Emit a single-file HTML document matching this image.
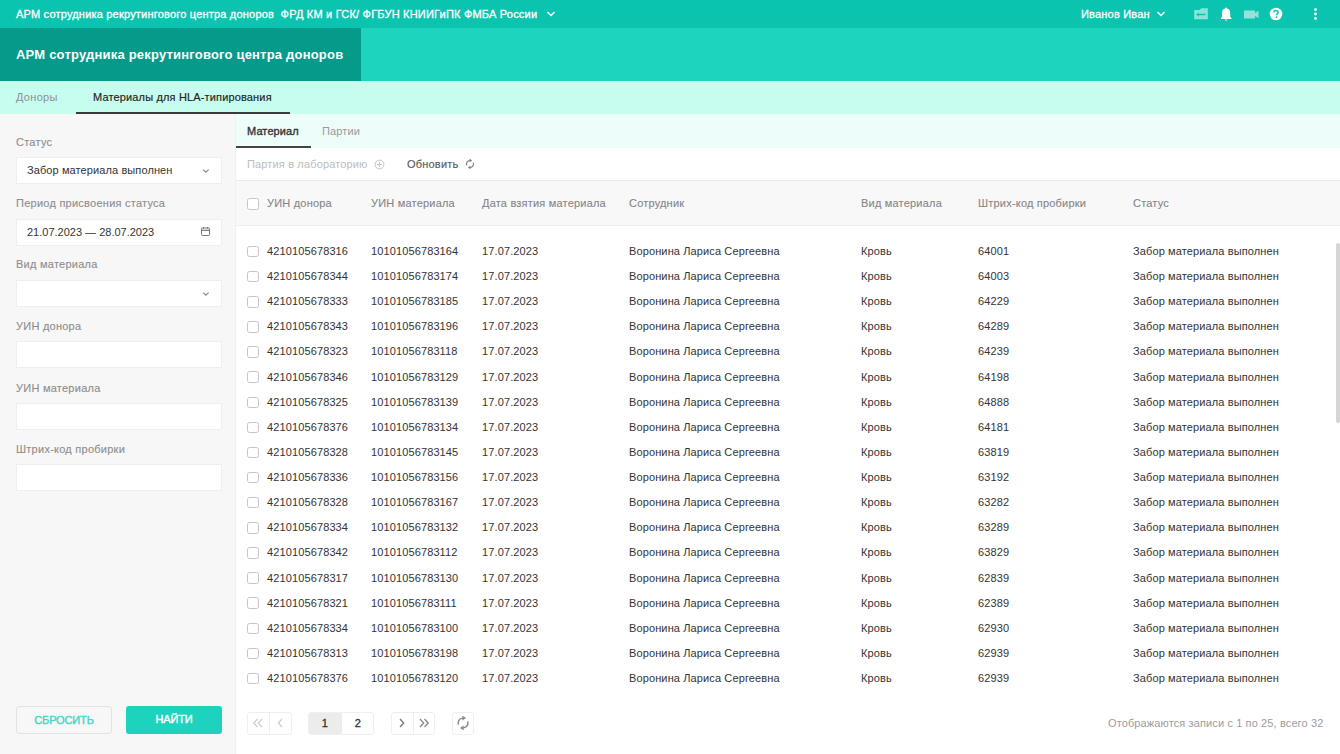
<!DOCTYPE html>
<html><head><meta charset="utf-8">
<style>
*{box-sizing:border-box;margin:0;padding:0}
html,body{width:1340px;height:754px;overflow:hidden;background:#fff;font-family:"Liberation Sans",sans-serif;position:relative}
.abs{position:absolute;white-space:nowrap}
#top{position:absolute;left:0;top:0;width:1340px;height:28px;background:#0ac4b0;color:#fff;font-size:11px}
#top .t{letter-spacing:0.2px;-webkit-text-stroke:0.3px #fff}
#hdr{position:absolute;left:0;top:28px;width:1340px;height:53px;background:#1dd5bf}
#hdr .blk{position:absolute;left:0;top:0;width:361px;height:53px;background:#069a8b}
#hdr .t{position:absolute;left:16px;top:19px;font-size:13px;font-weight:bold;color:#fff;letter-spacing:0.2px}
#nav{position:absolute;left:0;top:81px;width:1340px;height:33px;background:#c6fdef}
#nav .t1{left:16px;top:10px;font-size:11px;color:#8f8f8f;letter-spacing:0.3px}
#nav .t2{left:93px;top:10px;font-size:11px;color:#222;letter-spacing:0.15px;-webkit-text-stroke:0.15px #222}
#nav .ul{position:absolute;left:76px;top:31px;width:214px;height:2px;background:#3a3a3a}
#side{position:absolute;left:0;top:114px;width:236px;height:640px;background:#f7f7f7;border-right:1px solid #f1f1f1}
.lbl{position:absolute;left:16px;font-size:11px;color:#8c8c8c;letter-spacing:0.25px;-webkit-text-stroke:0.1px #8c8c8c}
.inp{position:absolute;left:16px;width:206px;height:27.3px;background:#fff;border:1px solid #efefef}
.inp .v{position:absolute;left:10px;top:6px;font-size:11px;color:#333;letter-spacing:0.1px}
#sub{position:absolute;left:236px;top:114px;width:1104px;height:34px;background:#edfefa}
#sub .t1{left:11px;top:11px;font-size:11px;color:#333;letter-spacing:0.1px;-webkit-text-stroke:0.35px #333}
#sub .t2{left:86px;top:11px;font-size:11px;color:#999;letter-spacing:0.15px}
#sub .ul{position:absolute;left:0;top:32px;width:75px;height:2px;background:#444}
#tool{position:absolute;left:236px;top:148px;width:1104px;height:33px;background:#fff}
#th{position:absolute;left:236px;top:180px;width:1104px;height:46px;background:#f8f8f8;border-top:1px solid #ebebeb;border-bottom:1px solid #eeeeee}
#th span{position:absolute;top:16px;font-size:11px;color:#858585;letter-spacing:0.2px;-webkit-text-stroke:0.1px #858585}
.cb{position:absolute;width:11.5px;height:11.5px;border:1px solid #c6c6c6;border-radius:2.5px;background:#fff}
#rows{position:absolute;left:236px;top:239px;width:1104px}
.row{position:absolute;left:0;width:1104px;height:25px}
.row span{position:absolute;top:6px;font-size:11px;color:#333;white-space:nowrap;letter-spacing:0.12px}
.row .cb{left:11px;top:6.8px}
.c1{left:31px}.c2{left:135px}.c3{left:246px}.c4{left:393px}.c5{left:625px}.c6{left:742px}.c7{left:897px}
#scroll{position:absolute;left:1336px;top:243px;width:4px;height:180px;background:#d6d6d6;border-radius:2px}
.btn{position:absolute;top:706px;height:28px;border-radius:3px;font-size:11px;text-align:center;line-height:26.5px;letter-spacing:-0.15px;-webkit-text-stroke:0.4px currentColor}
.pg{position:absolute;top:712px;height:23px;border:1px solid #efefef;border-radius:3px;background:#fff;display:flex}
.pg div{height:21px;line-height:21px;text-align:center;font-size:11px;color:#333;position:relative}
</style></head><body>
<div id="top">
  <span class="abs t" style="left:16px;top:8px">АРМ сотрудника рекрутингового центра доноров&nbsp; ФРД КМ и ГСК/ ФГБУН КНИИГиПК ФМБА России</span>
  <svg class="abs" style="left:546px;top:10px" width="10" height="8" viewBox="0 0 10 8"><path d="M1.5 2 L5 5.5 L8.5 2" fill="none" stroke="#fff" stroke-width="1.4"/></svg>
  <span class="abs t" style="left:1081px;top:8px">Иванов Иван</span>
  <svg class="abs" style="left:1156px;top:10px" width="10" height="8" viewBox="0 0 10 8"><path d="M1.5 2 L5 5.5 L8.5 2" fill="none" stroke="#fff" stroke-width="1.4"/></svg>
  <!-- folder icon -->
  <svg class="abs" style="left:1193px;top:7px" width="16" height="14" viewBox="0 0 16 14"><path d="M1.2 3 H6.6 L8.2 1.3 H14.8 V12.2 H1.2 Z" fill="#fff" fill-opacity="0.52"/><path d="M4.6 7.5 H12.6" stroke="#0ac4b0" stroke-width="1.5"/><path d="M3.2 7.5 L5.6 5.6 V9.4 Z" fill="#0ac4b0"/></svg>
  <!-- bell -->
  <svg class="abs" style="left:1219px;top:7px" width="14" height="15" viewBox="0 0 14 15"><path d="M7.1 0.5 C7.6 0.5 8 0.9 8 1.4 C10.2 1.9 11.2 3.6 11.2 6 V9.8 L12.4 11 V11.9 H1.8 V11 L3 9.8 V6 C3 3.6 4 1.9 6.2 1.4 C6.2 0.9 6.6 0.5 7.1 0.5 Z" fill="#fff"/><path d="M5.9 12.6 H8.3 C8.3 13.3 7.8 13.8 7.1 13.8 C6.4 13.8 5.9 13.3 5.9 12.6 Z" fill="#fff"/></svg>
  <!-- video -->
  <svg class="abs" style="left:1243px;top:9px" width="17" height="11" viewBox="0 0 17 11"><rect x="1" y="1.5" width="11" height="8" rx="0.8" fill="#fff" fill-opacity="0.55"/><path d="M12 4 L15.5 1.8 V9.2 L12 7 Z" fill="#fff" fill-opacity="0.55"/></svg>
  <!-- help -->
  <svg class="abs" style="left:1269px;top:7px" width="14" height="14" viewBox="0 0 14 14"><circle cx="7" cy="7" r="6.3" fill="#fff"/><path d="M4.9 5.4 C4.9 4.1 5.9 3.4 7 3.4 C8.2 3.4 9.1 4.1 9.1 5.2 C9.1 6.6 7.6 6.7 7.6 8.3" fill="none" stroke="#0ac4b0" stroke-width="1.5"/><circle cx="7.6" cy="10.2" r="0.9" fill="#0ac4b0"/></svg>
  <!-- dots -->
  <svg class="abs" style="left:1313px;top:7px" width="5" height="14" viewBox="0 0 5 14"><circle cx="2.5" cy="2.6" r="1.4" fill="#fff"/><circle cx="2.5" cy="7" r="1.4" fill="#fff"/><circle cx="2.5" cy="11.4" r="1.4" fill="#fff"/></svg>
</div>
<div id="hdr"><div class="blk"></div><div class="t abs">АРМ сотрудника рекрутингового центра доноров</div></div>
<div id="nav"><span class="abs t1">Доноры</span><span class="abs t2">Материалы для HLA-типирования</span><div class="ul"></div></div>
<div id="side">
  <div class="lbl" style="top:22px">Статус</div>
  <div class="inp" style="top:43px"><span class="v abs">Забор материала выполнен</span>
    <svg class="abs" style="left:185px;top:10px" width="8" height="6" viewBox="0 0 8 6"><path d="M1.2 1.6 L3.9 4.1 L6.6 1.6" fill="none" stroke="#8a8a8a" stroke-width="1.25"/></svg></div>
  <div class="lbl" style="top:83px">Период присвоения статуса</div>
  <div class="inp" style="top:104.5px"><span class="v abs" style="letter-spacing:0">21.07.2023 — 28.07.2023</span>
    <svg class="abs" style="left:183px;top:6.5px" width="11" height="11" viewBox="0 0 11 11"><rect x="1.5" y="2" width="8" height="7.5" rx="0.8" fill="none" stroke="#777" stroke-width="1"/><path d="M1.5 4.3 H9.5" stroke="#777" stroke-width="1.2"/><path d="M3.5 1 V2.5 M7.5 1 V2.5" stroke="#777" stroke-width="1"/></svg></div>
  <div class="lbl" style="top:144px">Вид материала</div>
  <div class="inp" style="top:165.6px">
    <svg class="abs" style="left:185px;top:10px" width="8" height="6" viewBox="0 0 8 6"><path d="M1.2 1.6 L3.9 4.1 L6.6 1.6" fill="none" stroke="#8a8a8a" stroke-width="1.25"/></svg></div>
  <div class="lbl" style="top:206px">УИН донора</div>
  <div class="inp" style="top:227px"></div>
  <div class="lbl" style="top:268px">УИН материала</div>
  <div class="inp" style="top:288.5px"></div>
  <div class="lbl" style="top:329px">Штрих-код пробирки</div>
  <div class="inp" style="top:349.7px"></div>
</div>
<div class="btn" style="left:16px;width:96px;border:1px solid #e3e3e3;color:#45d6c2;background:#f7f7f7">СБРОСИТЬ</div>
<div class="btn" style="left:126px;width:96px;background:#1dd3bd;color:#fff">НАЙТИ</div>
<div id="sub"><span class="abs t1">Материал</span><span class="abs t2">Партии</span><div class="ul"></div></div>
<div id="tool">
  <span class="abs" style="left:11px;top:10px;font-size:11px;color:#bcbcbc;letter-spacing:0.15px">Партия в лабораторию</span>
  <svg class="abs" style="left:138px;top:11px" width="11" height="11" viewBox="0 0 11 11"><circle cx="5.5" cy="5.5" r="4.4" fill="none" stroke="#c4c4c4" stroke-width="1"/><path d="M5.5 3 V8 M3 5.5 H8" stroke="#c4c4c4" stroke-width="1"/></svg>
  <span class="abs" style="left:171px;top:10px;font-size:11px;color:#5a5a5a;letter-spacing:0.2px;-webkit-text-stroke:0.15px #5a5a5a">Обновить</span>
  <svg class="abs" style="left:229px;top:11px" width="10" height="10" viewBox="0 0 10 10"><path d="M1.71 6.2 A3.5 3.5 0 0 1 4.7 1.51" fill="none" stroke="#7a7a7a" stroke-width="1.1"/><path d="M8.29 3.8 A3.5 3.5 0 0 1 5.3 8.49" fill="none" stroke="#7a7a7a" stroke-width="1.1"/><path d="M7.2 1.5 L4.5 -0.3 L4.5 3.3 Z" fill="#7a7a7a"/><path d="M2.8 8.5 L5.5 6.7 L5.5 10.3 Z" fill="#7a7a7a"/></svg>
</div>
<div id="th">
  <div class="cb" style="left:11px;top:17px"></div>
  <span style="left:31px">УИН донора</span><span style="left:135px">УИН материала</span><span style="left:246px">Дата взятия материала</span><span style="left:393px">Сотрудник</span><span style="left:625px">Вид материала</span><span style="left:742px">Штрих-код пробирки</span><span style="left:897px">Статус</span>
</div>
<div id="rows">
<div class="row" style="top:0.00px"><span class="cb"></span><span class="c1">4210105678316</span><span class="c2">10101056783164</span><span class="c3">17.07.2023</span><span class="c4">Воронина Лариса Сергеевна</span><span class="c5">Кровь</span><span class="c6">64001</span><span class="c7">Забор материала выполнен</span></div>
<div class="row" style="top:25.12px"><span class="cb"></span><span class="c1">4210105678344</span><span class="c2">10101056783174</span><span class="c3">17.07.2023</span><span class="c4">Воронина Лариса Сергеевна</span><span class="c5">Кровь</span><span class="c6">64003</span><span class="c7">Забор материала выполнен</span></div>
<div class="row" style="top:50.24px"><span class="cb"></span><span class="c1">4210105678333</span><span class="c2">10101056783185</span><span class="c3">17.07.2023</span><span class="c4">Воронина Лариса Сергеевна</span><span class="c5">Кровь</span><span class="c6">64229</span><span class="c7">Забор материала выполнен</span></div>
<div class="row" style="top:75.36px"><span class="cb"></span><span class="c1">4210105678343</span><span class="c2">10101056783196</span><span class="c3">17.07.2023</span><span class="c4">Воронина Лариса Сергеевна</span><span class="c5">Кровь</span><span class="c6">64289</span><span class="c7">Забор материала выполнен</span></div>
<div class="row" style="top:100.48px"><span class="cb"></span><span class="c1">4210105678323</span><span class="c2">10101056783118</span><span class="c3">17.07.2023</span><span class="c4">Воронина Лариса Сергеевна</span><span class="c5">Кровь</span><span class="c6">64239</span><span class="c7">Забор материала выполнен</span></div>
<div class="row" style="top:125.60px"><span class="cb"></span><span class="c1">4210105678346</span><span class="c2">10101056783129</span><span class="c3">17.07.2023</span><span class="c4">Воронина Лариса Сергеевна</span><span class="c5">Кровь</span><span class="c6">64198</span><span class="c7">Забор материала выполнен</span></div>
<div class="row" style="top:150.72px"><span class="cb"></span><span class="c1">4210105678325</span><span class="c2">10101056783139</span><span class="c3">17.07.2023</span><span class="c4">Воронина Лариса Сергеевна</span><span class="c5">Кровь</span><span class="c6">64888</span><span class="c7">Забор материала выполнен</span></div>
<div class="row" style="top:175.84px"><span class="cb"></span><span class="c1">4210105678376</span><span class="c2">10101056783134</span><span class="c3">17.07.2023</span><span class="c4">Воронина Лариса Сергеевна</span><span class="c5">Кровь</span><span class="c6">64181</span><span class="c7">Забор материала выполнен</span></div>
<div class="row" style="top:200.96px"><span class="cb"></span><span class="c1">4210105678328</span><span class="c2">10101056783145</span><span class="c3">17.07.2023</span><span class="c4">Воронина Лариса Сергеевна</span><span class="c5">Кровь</span><span class="c6">63819</span><span class="c7">Забор материала выполнен</span></div>
<div class="row" style="top:226.08px"><span class="cb"></span><span class="c1">4210105678336</span><span class="c2">10101056783156</span><span class="c3">17.07.2023</span><span class="c4">Воронина Лариса Сергеевна</span><span class="c5">Кровь</span><span class="c6">63192</span><span class="c7">Забор материала выполнен</span></div>
<div class="row" style="top:251.20px"><span class="cb"></span><span class="c1">4210105678328</span><span class="c2">10101056783167</span><span class="c3">17.07.2023</span><span class="c4">Воронина Лариса Сергеевна</span><span class="c5">Кровь</span><span class="c6">63282</span><span class="c7">Забор материала выполнен</span></div>
<div class="row" style="top:276.32px"><span class="cb"></span><span class="c1">4210105678334</span><span class="c2">10101056783132</span><span class="c3">17.07.2023</span><span class="c4">Воронина Лариса Сергеевна</span><span class="c5">Кровь</span><span class="c6">63289</span><span class="c7">Забор материала выполнен</span></div>
<div class="row" style="top:301.44px"><span class="cb"></span><span class="c1">4210105678342</span><span class="c2">10101056783112</span><span class="c3">17.07.2023</span><span class="c4">Воронина Лариса Сергеевна</span><span class="c5">Кровь</span><span class="c6">63829</span><span class="c7">Забор материала выполнен</span></div>
<div class="row" style="top:326.56px"><span class="cb"></span><span class="c1">4210105678317</span><span class="c2">10101056783130</span><span class="c3">17.07.2023</span><span class="c4">Воронина Лариса Сергеевна</span><span class="c5">Кровь</span><span class="c6">62839</span><span class="c7">Забор материала выполнен</span></div>
<div class="row" style="top:351.68px"><span class="cb"></span><span class="c1">4210105678321</span><span class="c2">10101056783111</span><span class="c3">17.07.2023</span><span class="c4">Воронина Лариса Сергеевна</span><span class="c5">Кровь</span><span class="c6">62389</span><span class="c7">Забор материала выполнен</span></div>
<div class="row" style="top:376.80px"><span class="cb"></span><span class="c1">4210105678334</span><span class="c2">10101056783100</span><span class="c3">17.07.2023</span><span class="c4">Воронина Лариса Сергеевна</span><span class="c5">Кровь</span><span class="c6">62930</span><span class="c7">Забор материала выполнен</span></div>
<div class="row" style="top:401.92px"><span class="cb"></span><span class="c1">4210105678313</span><span class="c2">10101056783198</span><span class="c3">17.07.2023</span><span class="c4">Воронина Лариса Сергеевна</span><span class="c5">Кровь</span><span class="c6">62939</span><span class="c7">Забор материала выполнен</span></div>
<div class="row" style="top:427.04px"><span class="cb"></span><span class="c1">4210105678376</span><span class="c2">10101056783120</span><span class="c3">17.07.2023</span><span class="c4">Воронина Лариса Сергеевна</span><span class="c5">Кровь</span><span class="c6">62939</span><span class="c7">Забор материала выполнен</span></div>
</div>
<div id="scroll"></div>
<div class="pg" style="left:247px;width:45px"><div style="width:22px;border-right:1px solid #eeeeee"></div><div style="width:21px"></div></div>
<svg class="abs" style="left:252px;top:718px" width="12" height="10" viewBox="0 0 12 10"><path d="M5.5 1 L1.8 5 L5.5 9 M10 1 L6.3 5 L10 9" fill="none" stroke="#cfcfcf" stroke-width="1.3"/></svg>
<svg class="abs" style="left:276px;top:718px" width="8" height="10" viewBox="0 0 8 10"><path d="M6 1 L2.3 5 L6 9" fill="none" stroke="#cfcfcf" stroke-width="1.3"/></svg>
<div class="pg" style="left:308px;width:66px"><div style="width:34px;background:#ececec;-webkit-text-stroke:0.3px #333;text-indent:-2px">1</div><div style="width:31px;-webkit-text-stroke:0.3px #333">2</div></div>
<div class="pg" style="left:391px;width:44px"><div style="width:22px;border-right:1px solid #eeeeee"></div><div style="width:21px"></div></div>
<svg class="abs" style="left:398px;top:718px" width="8" height="10" viewBox="0 0 8 10"><path d="M2 1 L5.7 5 L2 9" fill="none" stroke="#777" stroke-width="1.3"/></svg>
<svg class="abs" style="left:418px;top:718px" width="12" height="10" viewBox="0 0 12 10"><path d="M2 1 L5.7 5 L2 9 M6.5 1 L10.2 5 L6.5 9" fill="none" stroke="#888" stroke-width="1.3"/></svg>
<div class="pg" style="left:452px;width:22px"></div>
<svg class="abs" style="left:456px;top:716px" width="14" height="14" viewBox="0 0 10 10"><path d="M1.71 6.2 A3.5 3.5 0 0 1 4.7 1.51" fill="none" stroke="#8a8a8a" stroke-width="1.05"/><path d="M8.29 3.8 A3.5 3.5 0 0 1 5.3 8.49" fill="none" stroke="#8a8a8a" stroke-width="1.05"/><path d="M7.2 1.5 L4.5 -0.3 L4.5 3.3 Z" fill="#8a8a8a"/><path d="M2.8 8.5 L5.5 6.7 L5.5 10.3 Z" fill="#8a8a8a"/></svg>
<span class="abs" style="left:1108px;top:717px;font-size:11px;color:#9c9c9c;letter-spacing:0.12px">Отображаются записи с 1 по 25, всего 32</span>
</body></html>
